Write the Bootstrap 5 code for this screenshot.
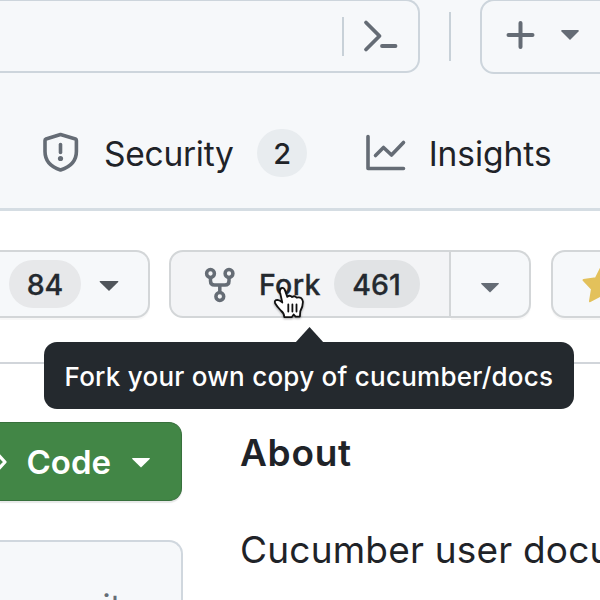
<!DOCTYPE html>
<html lang="en">
<head>
<meta charset="utf-8">
<meta name="viewport" content="width=device-width, initial-scale=1">
<title>cucumber/docs</title>
<link href="https://cdn.jsdelivr.net/npm/bootstrap@5.3.0/dist/css/bootstrap.min.css" rel="stylesheet">
<style>
  body { width: 600px; height: 600px; font-family: Inter, "Liberation Sans", sans-serif; color: #1f2328; background: #fff; }
  svg { display: block; flex: none; overflow: visible; }
  .txt { display: block; line-height: 1; white-space: nowrap; }
  .site-head { height: 211px; background: #f6f8fa; border-bottom: 3px solid #d5dde3; }
  .tool-row { height: 74px; margin-top: -1px; }
  .search-box { width: 420px; height: 74px; border: 2px solid #cdd5dc; border-left: 0; border-radius: 0 14px 14px 0; }
  .search-rule { width: 2px; height: 39px; background: #c8d1d8; margin-right: 20px; }
  .head-rule { width: 2px; height: 49px; background: #c8d1d8; margin-left: 29px; }
  .plus-box { width: 150px; height: 75px; border: 2px solid #cdd5dc; border-radius: 14px; margin-left: 29px; padding-left: 24px; }
  .plus-caret { margin: -2px 0 0 26px; }
  .tab-row { height: 136px; padding: 23px 0 0 43px; }
  .tab-text { font-size: 33.5px; padding-top: 4px; }
  .tab-security { letter-spacing: -.25px; margin-left: 25px; }
  .tab-insights { letter-spacing: -.05px; margin-left: 22.5px; }
  .tab-graph { margin-left: 59px; }
  .count { border-radius: 24px; height: 48px; line-height: 1; }
  .count-2 { width: 50px; background: #e8ecef; font-size: 29px; font-weight: 500; margin-left: 23.5px; padding-top: 1px; }
  .act-row { height: 68px; margin-top: 39px; }
  .act-btn { height: 68px; background: #f6f8fa; border: 2px solid #d3d6d8; box-shadow: 0 2px 1px rgba(31,35,40,.035); font-weight: 500; font-size: 28.5px; color: #24292f; }
  .watch { width: 149.5px; border-left: 0; border-radius: 0 14px 14px 0; padding-left: 9px; }
  .watch-caret { margin: 4px 0 0 18px; }
  .fork { width: 282px; margin-left: 19.5px; border-radius: 14px 0 0 14px; background: #f3f4f6; padding-left: 34px; box-shadow: none; }
  .fork-label { width: 62px; margin-left: 24px; padding-top: 2px; letter-spacing: .35px; -webkit-text-stroke: .3px #24292f; }
  .fork-more { width: 80px; border-left: 0; border-radius: 0 14px 14px 0; padding-left: 29px; }
  .star { width: 100px; margin-left: 20px; border-radius: 14px; padding-left: 29px; }
  .count-84, .count-461 { padding-top: 2px; -webkit-text-stroke: .3px #24292f; }
  .count-84 { width: 72px; background: #e7e8ea; }
  .count-461 { width: 86px; background: #e1e3e5; margin-left: 12.5px; }
  .page-rule { height: 2px; background: #d1d5da; margin-top: 44px; }
  .tip { left: 44px; top: 342px; width: 530px; height: 67px; border-radius: 13px; background: #24292e; color: #fff; font-size: 26px; font-weight: 500; padding: 1px 0 0 20.5px; letter-spacing: .245px; white-space: nowrap; }
  .tip-arrow { left: 251px; top: -15px; }
  .pointer { left: 273px; top: 286px; filter: drop-shadow(0 1px 1px rgba(0,0,0,.35)); }
  .left-col { width: 183px; margin-top: 58px; }
  .code-btn { width: 182px; height: 79px; background: #428646; border: 1px solid #37703c; border-left: 0; border-radius: 0 13px 13px 0; box-shadow: 0 2px 1px rgba(31,35,40,.1); color: #fff; font-size: 33px; font-weight: 600; }
  .code-label { margin-left: 18.5px; padding-top: 2px; }
  .code-caret { margin-left: 19.5px; margin-top: 3px; }
  .commit-box { width: 183px; height: 61px; margin-top: 39px; border: 2px solid #d0d7de; border-left: 0; border-bottom: 0; border-radius: 0 14px 0 0; background: #f6f8fa; color: #656d76; font-size: 33px; padding: 48px 0 0 6px; }
  .about { width: 417px; height: 237px; padding: 70px 0 0 57px; }
  .about-title { font-size: 37px; font-weight: 600; letter-spacing: .7px; }
  .about-text { font-size: 37px; margin-top: 60px; letter-spacing: .2px; }
</style>
<script src="https://cdn.jsdelivr.net/npm/bootstrap@5.3.0/dist/js/bootstrap.bundle.min.js"></script>
</head>
<body class="position-relative overflow-hidden m-0">
<header class="site-head overflow-hidden">
  <div class="tool-row d-flex align-items-center">
    <div class="search-box d-flex align-items-center justify-content-end flex-shrink-0">
      <div class="search-rule"></div>
      <svg width="54" height="34" viewBox="0 0 54 34" fill="none" stroke="#656c75" stroke-width="3.8" stroke-linecap="round" stroke-linejoin="round"><path d="M2 3.500 15.500 17 2 30.500M18 27H31.500"/></svg>
    </div>
    <div class="head-rule flex-shrink-0"></div>
    <div class="plus-box d-flex align-items-center flex-shrink-0">
      <svg width="28" height="30" viewBox="0 0 28 30" fill="none" stroke="#656c75" stroke-width="4" stroke-linecap="round"><path d="M2.500 14h24M14.500 2v24"/></svg>
      <svg class="plus-caret" width="20" height="10" viewBox="0 0 20 10" fill="#656c75"><path d="M2 0h16q1.500.2.500 1.500L10 10 1.500 1.500Q.500.200 2 0z"/></svg>
    </div>
  </div>
  <nav class="tab-row d-flex align-items-center">
    <svg width="36" height="40" viewBox="0 0 36 40" fill="none" stroke="#656c75" stroke-width="3.6" stroke-linejoin="round"><path d="M17.500 1.500 32.500 6q.9.400.9 1.500v11q0 13.500-15.900 18.500Q2 32 2 18.500v-11Q2 6.400 3 6z"/><path d="M17.500 11.500v8" stroke-linecap="round"/><circle cx="17.500" cy="25.500" r="2.600" fill="#656c75" stroke="none"/></svg>
    <span class="txt tab-text tab-security">Security</span>
    <span class="count count-2 d-flex align-items-center justify-content-center">2</span>
    <svg class="tab-graph" width="40" height="36" viewBox="0 0 40 36" fill="none" stroke="#656c75" stroke-width="3.6" stroke-linecap="round" stroke-linejoin="round"><path d="M2 1.500v32h35.500M9.500 20.500l8-8 8 7.500L37.500 7.500"/></svg>
    <span class="txt tab-text tab-insights">Insights</span>
  </nav>
</header>
<div class="act-row d-flex">
  <div class="act-btn watch d-flex align-items-center flex-shrink-0">
    <span class="count count-84 d-flex align-items-center justify-content-center">84</span>
    <svg class="watch-caret" width="20" height="10" viewBox="0 0 20 10" fill="#50555b"><path d="M1 0h18q.7.200.2 1L10 10 .800 1Q.300.200 1 0z"/></svg>
  </div>
  <div class="act-btn fork d-flex align-items-center flex-shrink-0">
    <svg width="30" height="36" viewBox="0 0 30 36" fill="none" stroke="#656c75" stroke-width="3.5"><circle cx="5.500" cy="7.500" r="3.900"/><circle cx="24" cy="7.500" r="3.900"/><circle cx="14.800" cy="30.500" r="3.900"/><path d="M5.500 11.500v3.500q0 4 4 4H20q4 0 4-4v-3.500M14.800 19v7.500"/></svg>
    <span class="txt fork-label">Fork</span>
    <span class="count count-461 d-flex align-items-center justify-content-center">461</span>
  </div>
  <div class="act-btn fork-more d-flex align-items-center flex-shrink-0">
    <svg class="mt-2" width="20" height="10" viewBox="0 0 20 10" fill="#656c75"><path d="M1.500 0h17q.7.200.2 1L10 9.500 1.300 1Q.800.200 1.500 0z"/></svg>
  </div>
  <div class="act-btn star d-flex align-items-center flex-shrink-0">
    <svg width="38" height="36" viewBox="0 0 38 36" fill="#e3c15b" stroke="#e3c15b" stroke-width="2" stroke-linejoin="round"><path d="M19 2l5.100 10.300 12.400 1.800-9 8.800 2 12.300L19 29.400 8 35.200 10 23 1.500 14.100 13.900 12.300z"/></svg>
  </div>
</div>
<div class="page-rule"></div>
<div class="d-flex">
  <div class="left-col flex-shrink-0">
    <div class="code-btn d-flex align-items-center">
      <svg width="8" height="18" viewBox="0 0 8 18" fill="none" stroke="#fff" stroke-width="3.2" stroke-linejoin="round" stroke-linecap="round"><path d="M-2 1.500 5 9-2 16.500"/></svg>
      <span class="txt code-label">Code</span>
      <svg class="code-caret" width="20" height="10" viewBox="0 0 20 10" fill="#fff"><path d="M1.500 0h17q.7.200.2 1L10 9.500 1.300 1Q.800.200 1.500 0z"/></svg>
    </div>
    <div class="commit-box overflow-hidden"><span class="txt">commits</span></div>
  </div>
  <div class="about overflow-hidden">
    <h2 class="txt about-title mb-0">About</h2>
    <p class="txt about-text mb-0">Cucumber user docu</p>
  </div>
</div>
<div class="tip position-absolute d-flex align-items-center">
  <svg class="tip-arrow position-absolute" width="29" height="16" viewBox="0 0 29 16" fill="#24292e"><path d="M0 16 14.500 0 29 16z"/></svg>
  <span>Fork your own copy of cucumber/docs</span>
</div>
<svg class="pointer position-absolute" width="32" height="34" viewBox="0 0 32 34" fill="#fff" stroke="#111" stroke-width="1.8" stroke-linejoin="round" stroke-linecap="round"><path d="M9.300 16.500 7 6.200Q6.400 2.600 8.900 2q2.300-.4 3.300 2.900l2.100 6q2.300-2.300 4.800.1 2.700-1.700 4.600.7 5.500-1.400 6.200 4 .1 5-2.600 9.600l-.4 5.200-4.300.2-1.900-2.200-1.800 2.500-7.600.1Q11.300 27.300 7.800 24.500 4 20.500 2.100 17.200 1.100 13.900 4.500 13.800 7 14.100 9.300 16.500z"/><path d="M15.300 18.500v7M19.400 18.500v7M23.500 18.500v7" fill="none"/></svg>
</body>
</html>
